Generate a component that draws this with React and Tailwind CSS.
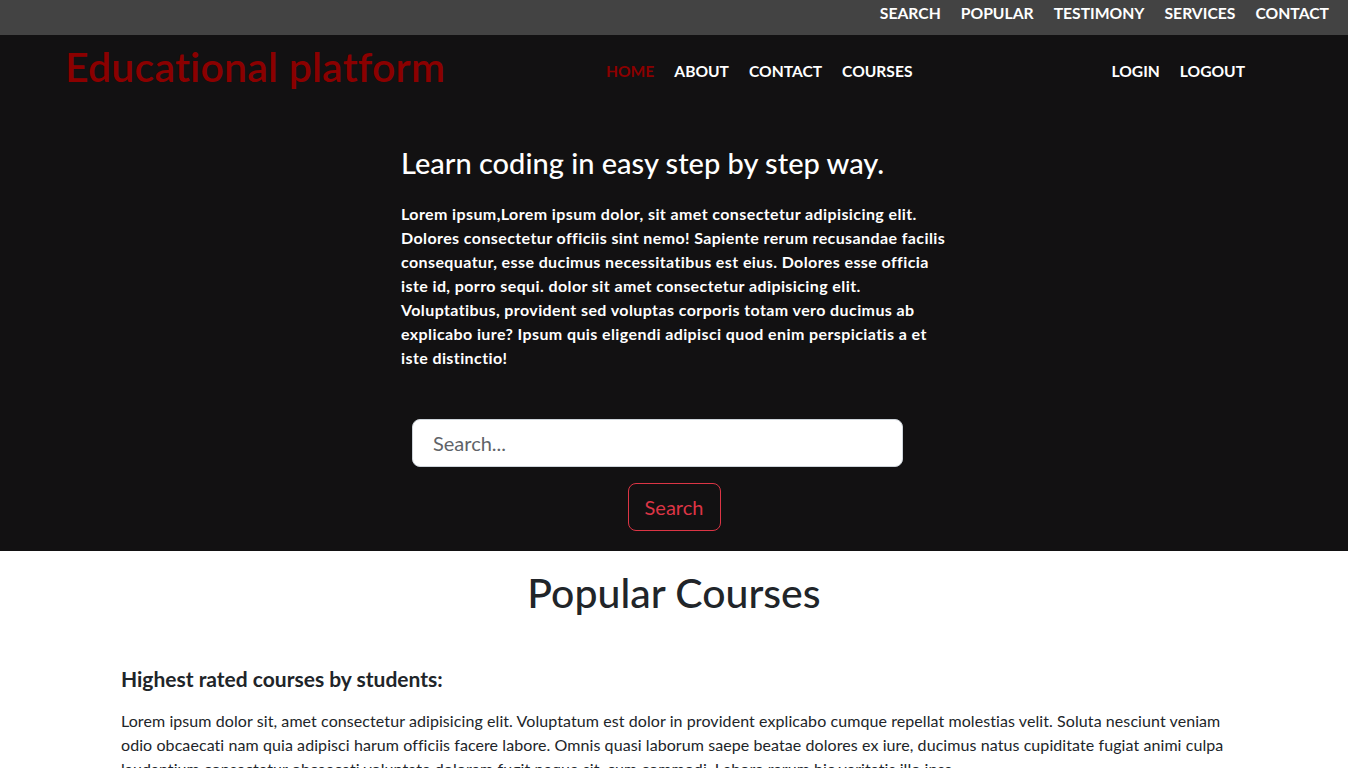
import React from "react";

const topLinks = ["SEARCH", "POPULAR", "TESTIMONY", "SERVICES", "CONTACT"];
const navLinks = ["ABOUT", "CONTACT", "COURSES"];

export default function App() {
  return (
    <div className="min-h-[768px] bg-white font-['Lato','Open_Sans',sans-serif] text-[#212529]">
      {/* top bar */}
      <div className="flex h-[35px] items-start justify-end gap-5 bg-[#434343] pr-[19px] pt-px">
        {topLinks.map((l) => (
          <a key={l} className="text-[15.7px] font-bold leading-6 text-white">
            {l}
          </a>
        ))}
      </div>

      {/* dark hero */}
      <div className="bg-[#121112] pb-[20px]">
        <nav className="flex h-[70px] items-center">
          <div className="w-[606px] shrink-0 pl-[65px]">
            <span className="relative -top-[3px] text-[41px] font-semibold leading-none tracking-[0.2px] text-[#8b0000]">
              Educational platform
            </span>
          </div>
          <div className="mt-[1px] flex gap-5">
            <a className="text-[15.6px] font-bold leading-6 text-[#8b0000]">HOME</a>
            {navLinks.map((l) => (
              <a key={l} className="text-[15.6px] font-bold leading-6 text-white">
                {l}
              </a>
            ))}
          </div>
          <div className="ml-auto mt-[1px] flex gap-5 pr-[103px]">
            <a className="text-[15.6px] font-bold leading-6 text-white">LOGIN</a>
            <a className="text-[15.6px] font-bold leading-6 text-white">LOGOUT</a>
          </div>
        </nav>

        <div className="mx-auto w-[550px] pl-[2px] pt-[41px] text-white">
          <h3 className="text-[29px] font-medium leading-[34px]">
            Learn coding in easy step by step way.
          </h3>
          <p className="mt-[22px] text-[16px] font-bold leading-6 tracking-[0.4px]">
            Lorem ipsum,Lorem ipsum dolor, sit amet consectetur adipisicing elit. Dolores
            consectetur officiis sint nemo! Sapiente rerum recusandae facilis consequatur,
            esse ducimus necessitatibus est eius. Dolores esse officia iste id, porro sequi.
            dolor sit amet consectetur adipisicing elit. Voluptatibus, provident sed voluptas
            corporis totam vero ducimus ab explicabo iure? Ipsum quis eligendi adipisci quod
            enim perspiciatis a et iste distinctio!
          </p>
        </div>

        <div className="mt-[49px] flex flex-col items-center">
          <div className="flex w-full justify-start pl-[412px]">
            <input
              type="text"
              placeholder="Search..."
              className="h-[48px] w-[491px] rounded-lg border border-[#ced4da] bg-white px-5 text-[20px] text-[#212529] outline-none placeholder:text-[#5f6368]"
            />
          </div>
          <button className="mt-4 h-[48px] w-[93px] rounded-lg border border-[#dc3545] text-center text-[20px] text-[#dc3545]">
            Search
          </button>
        </div>
      </div>

      {/* popular courses */}
      <div>
        <h1 className="pt-[18px] text-center text-[41px] font-medium leading-[48px] text-[#212529]">
          Popular Courses
        </h1>
        <div className="w-[1229px] pl-[121px] pt-[50px]">
          <h5 className="text-[21px] font-bold leading-6">Highest rated courses by students:</h5>
          <p className="mt-[18px] text-[16px] leading-6 tracking-[0.08px]">
            Lorem ipsum dolor sit, amet consectetur adipisicing elit. Voluptatum est dolor in
            provident explicabo cumque repellat molestias velit. Soluta nesciunt veniam odio
            obcaecati nam quia adipisci harum officiis facere labore. Omnis quasi laborum saepe
            beatae dolores ex iure, ducimus natus cupiditate fugiat animi culpa laudantium
            consectetur obcaecati voluptate dolorem fugit neque sit, cum commodi. Labore rerum
            hic veritatis illo ipsa.
          </p>
        </div>
      </div>
    </div>
  );
}
